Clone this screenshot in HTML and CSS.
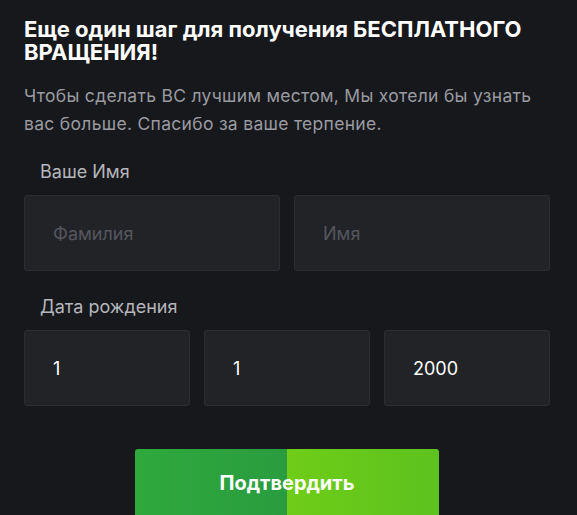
FILE: index.html
```html
<!DOCTYPE html>
<html lang="ru">
<head>
    <meta charset="UTF-8">
    <meta name="viewport" content="width=device-width, initial-scale=1.0">
    <title>Бесплатное вращение</title>
    <link rel="stylesheet" href="styles.css">
</head>
<body>
    <div class="form">
        <h2>Еще один шаг для получения БЕСПЛАТНОГО ВРАЩЕНИЯ!</h2>
        <p class="intro">Чтобы сделать ВС лучшим местом, Мы хотели бы узнать вас больше. Спасибо за ваше терпение.</p>

        <div class="group">
            <label>Ваше Имя</label>
            <div class="row two">
                <input type="text" placeholder="Фамилия">
                <input type="text" placeholder="Имя">
            </div>
        </div>

        <div class="group">
            <label>Дата рождения</label>
            <div class="row three">
                <input type="text" value="1">
                <input type="text" value="1">
                <input type="text" value="2000">
            </div>
        </div>

        <button>Подтвердить</button>
    </div>
</body>
</html>
```

FILE: styles.css
```css
body {
    margin: 0;
    background-color: #17181c;
    font-family: Inter, "Noto Sans", sans-serif;
    overflow: hidden;
}

.form {
    padding: 18px 27px 0 24px;
}

h2 {
    margin: 0;
    color: #ffffff;
    font-size: 22px;
    font-weight: 700;
    line-height: 23px;
}

.intro {
    margin: 18px 0 0;
    color: #9a9ba1;
    font-size: 17.5px;
    letter-spacing: 0.3px;
    line-height: 28px;
}

.group {
    margin-top: 24px;
}

.group + .group {
    margin-top: 26px;
}

label {
    display: block;
    padding-left: 16px;
    margin-bottom: 13px;
    color: #b5b6bb;
    font-size: 18px;
    line-height: 20px;
}

.row {
    display: grid;
    gap: 14px;
}

.two {
    grid-template-columns: 1fr 1fr;
}

.three {
    grid-template-columns: 1fr 1fr 1fr;
}

input {
    width: 100%;
    height: 76px;
    box-sizing: border-box;
    padding: 0 28px;
    background-color: #222327;
    border: 1px solid #2c2d32;
    border-radius: 3px;
    color: #ffffff;
    font-family: inherit;
    font-size: 18px;
    outline: none;
}

input::placeholder {
    color: #54565d;
}

button {
    display: block;
    width: 304px;
    height: 80px;
    margin: 43px auto 0;
    border: none;
    border-radius: 3px;
    background:
        linear-gradient(to right, #2fa93c 0%, #2a9c3f 50%, #6fcd18 50%, #5dc21f 100%);
    color: #ffffff;
    font-family: inherit;
    font-size: 20px;
    font-weight: 700;
    padding-bottom: 14px;
    cursor: pointer;
}
```
